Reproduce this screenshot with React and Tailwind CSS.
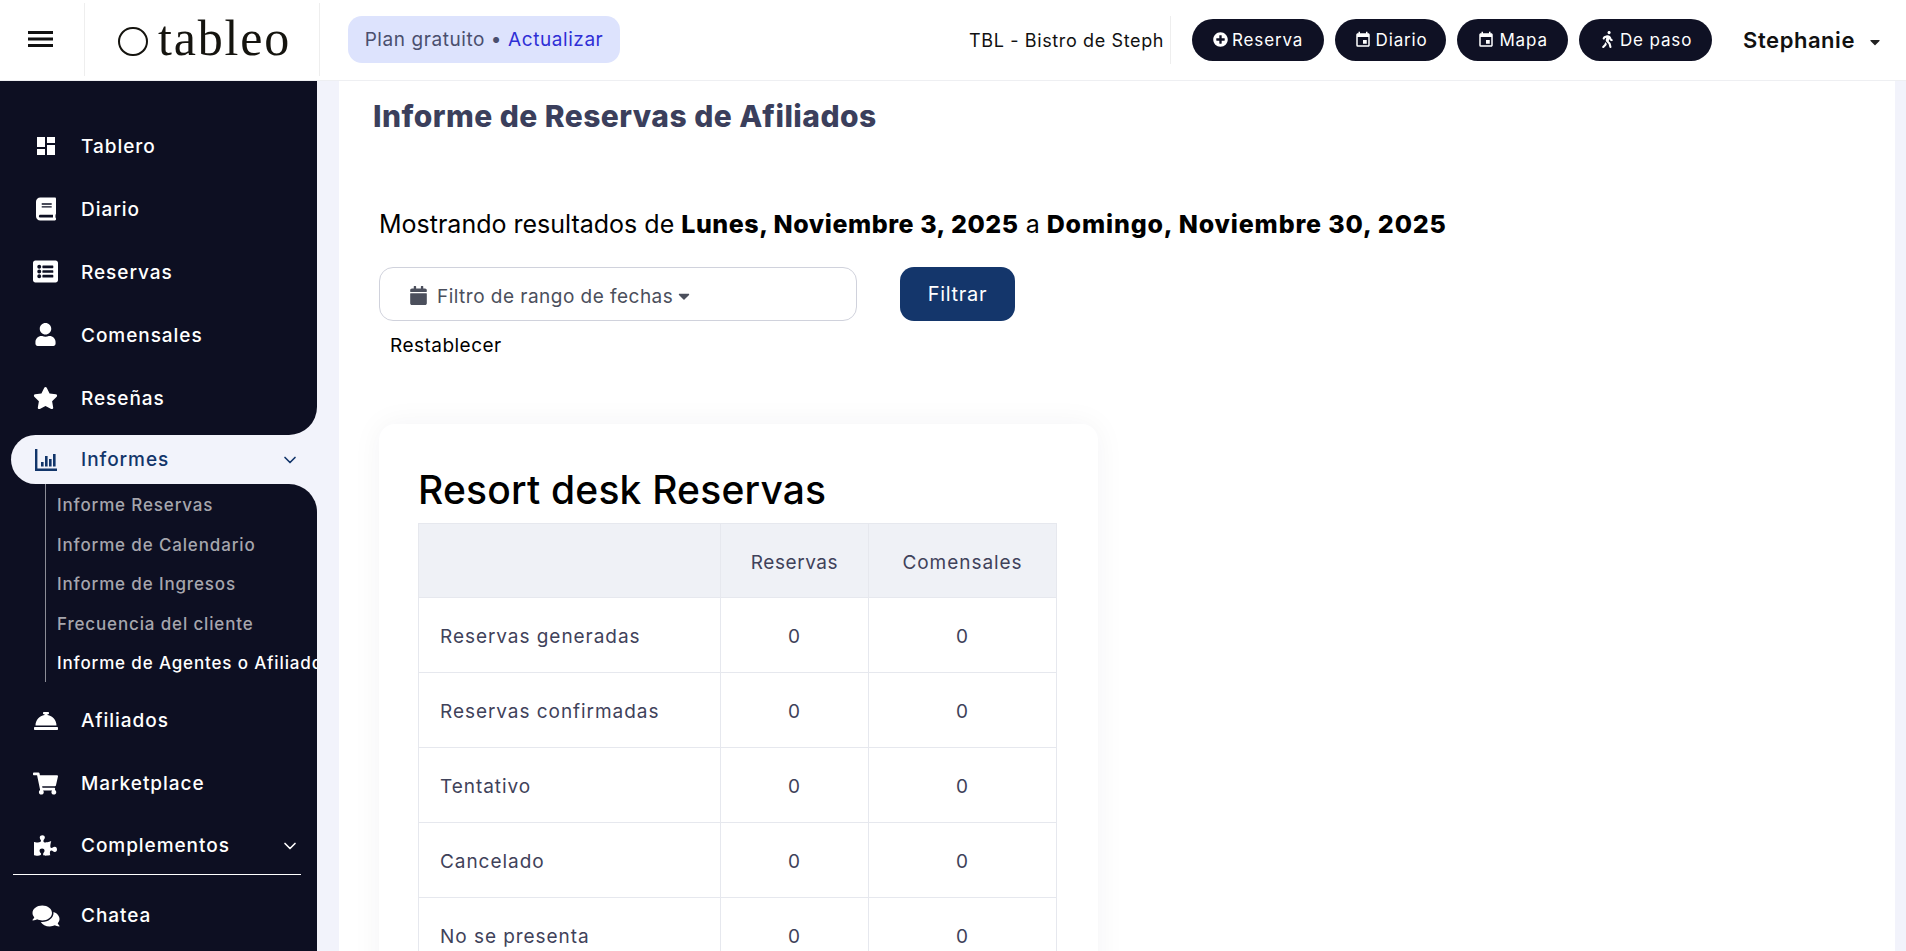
import React from "react";
import { ChevronDown } from "lucide-react";
import { FaBook, FaListAlt, FaUser, FaStar, FaConciergeBell, FaShoppingCart, FaPuzzlePiece, FaComments, FaPlusCircle, FaWalking, FaCalendar, FaCaretDown } from "react-icons/fa";
import { MdDashboard, MdEvent } from "react-icons/md";

const font = { fontFamily: "Inter, 'Liberation Sans', sans-serif" };

function ChartIcon({ className }) {
  return (
    <svg viewBox="0 0 24 24" className={className} fill="currentColor">
      <path d="M1 1h2.4v19.6H23V23H1z" />
      <rect x="7" y="14" width="2.6" height="4.5" />
      <rect x="11" y="8" width="2.6" height="10.5" />
      <rect x="15" y="11" width="2.6" height="7.5" />
      <rect x="19" y="6" width="2.6" height="12.5" />
    </svg>
  );
}

function NavItem({ icon, label, chevron, h = "h-[63px]", lift = "mt-[3px]" }) {
  return (
    <div className={`flex items-center ${h} text-white`}>
      <div className="w-[81px] flex justify-center pl-[10px] shrink-0">{icon}</div>
      <span className={`text-[19px] font-medium tracking-[0.05em] whitespace-nowrap ${lift}`}>{label}</span>
      {chevron && <ChevronDown className="ml-auto mr-[17px] w-[20px] h-[20px]" strokeWidth={2} />}
    </div>
  );
}

const subs = ["Informe Reservas", "Informe de Calendario", "Informe de Ingresos", "Frecuencia del cliente"];

function Sidebar() {
  return (
    <aside className="w-[317px] shrink-0 bg-[#f2f3fb] flex flex-col overflow-hidden">
      <div className="bg-[#0d0f22] rounded-br-[28px] pt-[33px] h-[354px]">
        <NavItem icon={<MdDashboard className="w-[24px] h-[24px]" />} label="Tablero" />
        <NavItem icon={<FaBook className="w-[20px] h-[24px]" />} label="Diario" />
        <NavItem icon={<FaListAlt className="w-[25px] h-[25px]" />} label="Reservas" />
        <NavItem icon={<FaUser className="w-[21px] h-[23px]" />} label="Comensales" />
        <NavItem icon={<FaStar className="w-[25px] h-[24px]" />} label="Reseñas" />
      </div>
      <div className="bg-[#0d0f22] shrink-0">
        <div className="ml-[11px] h-[49px] bg-[#f2f3fb] rounded-l-full flex items-center text-[#12356a]">
          <div className="w-[70px] flex justify-center shrink-0"><ChartIcon className="w-[24px] h-[24px]" /></div>
          <span className="text-[19px] font-medium tracking-[0.05em] mt-[2px]">Informes</span>
          <ChevronDown className="ml-auto mr-[17px] w-[20px] h-[20px]" strokeWidth={2} />
        </div>
      </div>
      <div className="bg-[#0d0f22] rounded-tr-[28px] flex-1 min-h-0">
        <div className="ml-[45px] border-l border-[#8b8c96] h-[198px] pl-[11px] pt-[2px] overflow-hidden">
          {subs.map((s) => (
            <div key={s} className="h-[39.5px] flex items-center text-[17px] font-medium tracking-[0.05em] text-[#a6a6ad] whitespace-nowrap">{s}</div>
          ))}
          <div className="h-[39.5px] flex items-center text-[17px] font-medium tracking-[0.05em] text-white whitespace-nowrap">Informe de Agentes o Afiliados</div>
        </div>
        <div className="pt-[7px]">
          <NavItem icon={<FaConciergeBell className="w-[24px] h-[24px]" />} label="Afiliados" lift="mt-[1px]" />
          <NavItem icon={<FaShoppingCart className="w-[25px] h-[23px]" />} label="Marketplace" lift="mt-[1px]" />
          <NavItem icon={<FaPuzzlePiece className="w-[23px] h-[23px]" />} label="Complementos" chevron h="h-[61px]" lift="mt-[1px]" />
          <div className="mx-[13px] mt-[-2px] mb-[11px] w-[288px] border-t border-white" />
          <NavItem icon={<FaComments className="w-[28px] h-[24px]" />} label="Chatea" h="h-[60px]" lift="mt-[1px]" />
        </div>
      </div>
    </aside>
  );
}

function HeaderBtn({ icon, label, w }) {
  return (
    <button className={`${w} h-[42px] rounded-full bg-[#0f1124] text-white flex items-center justify-center gap-[4px] text-[17px] tracking-[0.05em] whitespace-nowrap`}>
      {icon}
      <span className="mt-[3px]">{label}</span>
    </button>
  );
}

function Header() {
  return (
    <header className="h-[81px] shrink-0 bg-white border-b border-[#eeeff2] flex items-center">
      <div className="w-[85px] h-[73px] mt-[-2px] border-r border-[#eeeeee] flex items-center justify-center shrink-0 pr-[3px]">
        <svg viewBox="0 0 25 16" className="w-[25px] h-[16px]" fill="#111">
          <rect x="0" y="0" width="25" height="3" />
          <rect x="0" y="6.5" width="25" height="3" />
          <rect x="0" y="13" width="25" height="3" />
        </svg>
      </div>
      <div className="w-[235px] h-[73px] mt-[-2px] border-r border-[#eeeeee] flex items-center pl-[33px] gap-[10px] shrink-0 text-[#15140f]">
        <div className="w-[30px] h-[29px] rounded-full border-[2.5px] border-[#15140f] mt-[4px] shrink-0" />
        <span className="text-[50px] leading-none tracking-[1.8px] mb-[3px]" style={{ fontFamily: "'Liberation Serif', serif" }}>tableo</span>
      </div>
      <div className="ml-[28px] mt-[-1px] pt-[1px] w-[272px] h-[47px] rounded-[14px] bg-[#dde3fd] flex items-center justify-center text-[19px] tracking-[0.03em] text-[#4a4f6e] whitespace-nowrap">
        Plan gratuito •&nbsp;<span className="text-[#2f2fd6]">Actualizar</span>
      </div>
      <div className="ml-auto flex items-center">
        <span className="text-[18px] text-[#111] tracking-[0.035em] whitespace-nowrap mr-[6px]">TBL - Bistro de Steph</span>
        <div className="h-[48px] border-l border-[#eeeeee] mr-[21px]" />
        <div className="flex items-center gap-[11px] mt-[-1px]">
          <HeaderBtn w="w-[132px]" icon={<FaPlusCircle className="w-[15px] h-[15px]" />} label="Reserva" />
          <HeaderBtn w="w-[111px]" icon={<MdEvent className="w-[18px] h-[18px]" />} label="Diario" />
          <HeaderBtn w="w-[111px]" icon={<MdEvent className="w-[18px] h-[18px]" />} label="Mapa" />
          <HeaderBtn w="w-[133px]" icon={<FaWalking className="w-[17px] h-[17px]" />} label="De paso" />
        </div>
        <span className="ml-[31px] text-[22px] font-semibold tracking-[0.025em] text-[#111] whitespace-nowrap">Stephanie</span>
        <FaCaretDown className="ml-[12px] mr-[23px] w-[16px] h-[16px] mt-[4px] text-[#222]" />
      </div>
    </header>
  );
}

const rows = ["Reservas generadas", "Reservas confirmadas", "Tentativo", "Cancelado", "No se presenta", "Total"];

function ReportTable() {
  const cell = "border border-[#e6e8ee] text-center pt-[5px]";
  return (
    <table className="border-collapse table-fixed w-[638px] text-[19px] text-[#3f425a] tracking-[0.05em]">
      <colgroup>
        <col className="w-[302px]" />
        <col className="w-[148px]" />
        <col className="w-[188px]" />
      </colgroup>
      <thead>
        <tr className="h-[74px] bg-[#eff1f6]">
          <th className={cell}></th>
          <th className={`${cell} font-normal tracking-[0.03em]`}>Reservas</th>
          <th className={`${cell} font-normal`}>Comensales</th>
        </tr>
      </thead>
      <tbody>
        {rows.map((r) => (
          <tr key={r} className="h-[75px]">
            <td className="border border-[#e6e8ee] pl-[21px] pt-[5px]">{r}</td>
            <td className={cell}>0</td>
            <td className={cell}>0</td>
          </tr>
        ))}
      </tbody>
    </table>
  );
}

function Main() {
  return (
    <main className="flex-1 min-w-0 bg-[#f2f3fb] pl-[22px] pr-[11px] overflow-hidden">
      <div className="bg-white h-full pl-[34px] pt-[15px] overflow-hidden">
        <h1 className="text-[30px] leading-[40px] font-extrabold text-[#3b3f5c] tracking-[0.015em] whitespace-nowrap">Informe de Reservas de Afiliados</h1>
        <div className="pl-[6px]">
          <p className="mt-[70px] text-[25px] leading-[36px] text-black whitespace-nowrap">
            Mostrando resultados de <b className="font-extrabold tracking-[0.022em]">Lunes, Noviembre 3, 2025</b> a <b className="font-extrabold tracking-[0.034em]">Domingo, Noviembre 30, 2025</b>
          </p>
          <div className="mt-[25px] flex items-start gap-[43px]">
            <div className="w-[478px] h-[54px] rounded-[14px] border border-[#d0d2dc] flex items-center pl-[30px] text-[#4b4f5c] text-[19px] tracking-[0.025em]">
              <FaCalendar className="w-[17px] h-[19px] mr-[10px] mt-[3px]" />
              <span className="mt-[7px]">Filtro de rango de fechas</span>
              <FaCaretDown className="w-[18px] h-[18px] ml-[2px] mt-[3px]" />
            </div>
            <button className="w-[115px] h-[54px] rounded-[14px] bg-[#14366b] text-white text-[20px] tracking-[0.035em]">Filtrar</button>
          </div>
          <div className="mt-[11px] ml-[11px] text-[19px] leading-[27px] text-black tracking-[0.025em]">Restablecer</div>
          <section className="mt-[65px] w-[719px] bg-white rounded-[16px] shadow-[0_0_30px_rgba(30,30,60,0.05)] pl-[39px] pt-[40px] pb-[40px]">
            <h2 className="text-[39px] leading-[52px] font-medium text-black tracking-[0.005em] whitespace-nowrap mb-[7px]">Resort desk Reservas</h2>
            <ReportTable />
          </section>
        </div>
      </div>
    </main>
  );
}

export default function App() {
  return (
    <div className="w-[1906px] h-[951px] flex flex-col overflow-hidden bg-white" style={font}>
      <Header />
      <div className="flex flex-1 min-h-0">
        <Sidebar />
        <Main />
      </div>
    </div>
  );
}
